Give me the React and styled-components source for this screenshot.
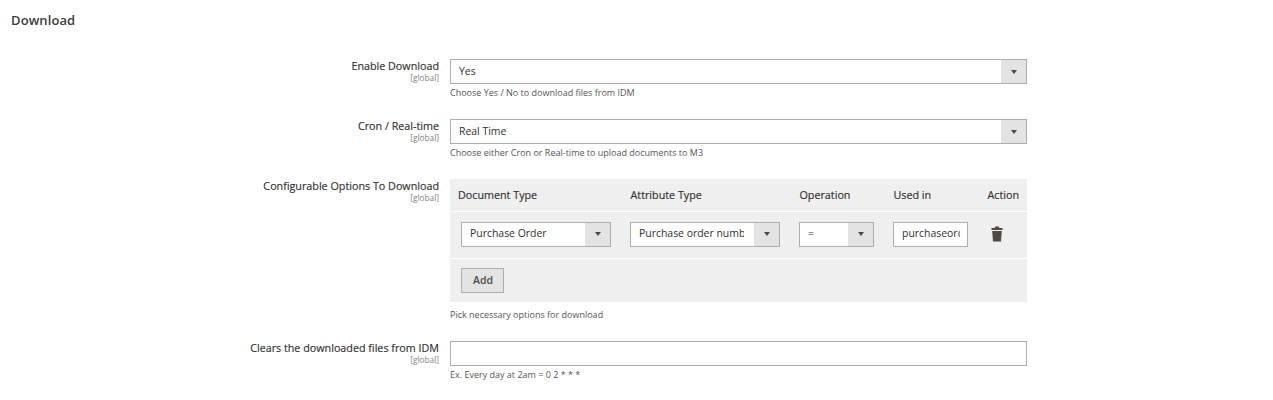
import React from 'react';
import styled, { createGlobalStyle } from 'styled-components';

const GlobalStyle = createGlobalStyle`
  html, body {
    margin: 0;
    padding: 0;
    background: #ffffff;
    font-family: 'Open Sans', 'Liberation Sans', sans-serif;
    color: #303030;
  }
`;

const Page = styled.div`
  width: 1273px;
  height: 400px;
  overflow: hidden;
  padding: 11px 0 0 11px;
  box-sizing: border-box;
`;

const Title = styled.h2`
  margin: 0 0 30px;
  height: 18px;
  font-size: 13px;
  line-height: 18px;
  font-weight: 600;
  letter-spacing: 0.1px;
  color: #3c3c3c;
`;

const Form = styled.div`
  display: flex;
  flex-direction: column;
`;

const Row = styled.div`
  display: grid;
  grid-template-columns: 428px 577px;
  column-gap: 11px;
  margin-bottom: ${({ $gap }) => $gap}px;
`;

const LabelCell = styled.div`
  text-align: right;
`;

const LabelText = styled.div`
  font-size: 10.75px;
  line-height: 14px;
  font-weight: 400;
  color: #303030;
  -webkit-text-stroke: 0.15px #303030;
`;

const Scope = styled.div`
  font-size: 8.3px;
  line-height: 10px;
  color: #808080;
`;

const SelectBox = styled.div`
  display: flex;
  box-sizing: border-box;
  width: ${({ $width }) => ($width ? `${$width}px` : '100%')};
  height: 25px;
  border: 1px solid #adadad;
  background: #ffffff;
`;

const NativeSelect = styled.select`
  flex: 1;
  min-width: 0;
  border: none;
  outline: none;
  appearance: none;
  background: #ffffff;
  padding: 0 ${({ $clip }) => ($clip ? 10 : 2)}px 2px 8px;
  font-family: inherit;
  font-size: 10.45px;
  color: #303030;
`;

const ArrowBox = styled.div`
  width: 25px;
  flex: none;
  display: flex;
  align-items: center;
  justify-content: center;
  background: #e3e3e3;
`;

const Arrow = styled.span`
  width: 0;
  height: 0;
  border-left: 3.5px solid transparent;
  border-right: 3.5px solid transparent;
  border-top: 4px solid #514943;
`;

const Hint = styled.div`
  font-size: 9px;
  line-height: 12px;
  margin-top: ${({ $top }) => $top || 3}px;
  color: #555555;
`;

const TextField = styled.input`
  display: block;
  box-sizing: border-box;
  width: ${({ $width }) => ($width ? `${$width}px` : '100%')};
  height: 25px;
  border: 1px solid #adadad;
  outline: none;
  background: #ffffff;
  padding: 0 7px 2px 8px;
  font-family: inherit;
  font-size: 10.45px;
  color: #303030;
`;

const OptionsTable = styled.div`
  background: #efefef;
  display: flex;
  flex-direction: column;
`;

const HeadRow = styled.div`
  display: grid;
  grid-template-columns: 172.5px 169px 94px 94px 40px;
  padding-left: 8px;
  height: 32px;
  align-items: center;
  border-bottom: 1px solid #ffffff;
`;

const HeadCell = styled.div`
  font-size: 10.75px;
  font-weight: 400;
  color: #303030;
  -webkit-text-stroke: 0.15px #303030;
`;

const BodyRow = styled.div`
  display: grid;
  grid-template-columns: 169px 169px 94px 94px 40px;
  padding: 0 0 2px 11px;
  box-sizing: border-box;
  height: 47px;
  align-items: center;
  border-bottom: 1px solid #ffffff;
`;

const TrashButton = styled.button`
  display: flex;
  padding: 0;
  margin-left: 4px;
  border: none;
  background: none;
`;

const FootRow = styled.div`
  height: 43px;
  display: flex;
  align-items: flex-start;
  padding: 9px 0 0 11px;
  box-sizing: border-box;
`;

const AddButton = styled.button`
  width: 43px;
  height: 25px;
  padding: 0 0 2px 1px;
  border: 1px solid #adadad;
  background: #e3e3e3;
  font-family: inherit;
  font-size: 10.5px;
  font-weight: 600;
  color: #514943;
`;

const TrashIcon = () => (
  <svg width="12" height="16" viewBox="0 0 12 16" fill="#514943">
    <path d="M4.2 0.5h3.6l.5 1.5H11.5v2H.5V2h3.2z" />
    <path d="M1.2 5h9.6l-.8 10.5H2z" />
  </svg>
);

const Select = ({ value, width, clip }) => (
  <SelectBox $width={width}>
    <NativeSelect defaultValue={value} $clip={clip}>
      <option>{value}</option>
    </NativeSelect>
    <ArrowBox>
      <Arrow />
    </ArrowBox>
  </SelectBox>
);

const Label = ({ children }) => (
  <LabelCell>
    <LabelText>{children}</LabelText>
    <Scope>[global]</Scope>
  </LabelCell>
);

const App = () => (
  <Page>
    <GlobalStyle />
    <Title>Download</Title>
    <Form>
      <Row $gap={20}>
        <Label>Enable Download</Label>
        <div>
          <Select value="Yes" />
          <Hint>Choose Yes / No to download files from IDM</Hint>
        </div>
      </Row>
      <Row $gap={20}>
        <Label>Cron / Real-time</Label>
        <div>
          <Select value="Real Time" />
          <Hint>Choose either Cron or Real-time to upload documents to M3</Hint>
        </div>
      </Row>
      <Row $gap={20}>
        <Label>Configurable Options To Download</Label>
        <div>
          <OptionsTable>
            <HeadRow>
              <HeadCell>Document Type</HeadCell>
              <HeadCell>Attribute Type</HeadCell>
              <HeadCell>Operation</HeadCell>
              <HeadCell>Used in</HeadCell>
              <HeadCell>Action</HeadCell>
            </HeadRow>
            <BodyRow>
              <Select value="Purchase Order" width={150} clip />
              <Select value="Purchase order number" width={150} clip />
              <Select value="=" width={75} clip />
              <TextField $width={75} defaultValue="purchaseorder" />
              <TrashButton type="button" aria-label="Delete">
                <TrashIcon />
              </TrashButton>
            </BodyRow>
            <FootRow>
              <AddButton type="button">Add</AddButton>
            </FootRow>
          </OptionsTable>
          <Hint $top={7}>Pick necessary options for download</Hint>
        </div>
      </Row>
      <Row $gap={0}>
        <Label>Clears the downloaded files from IDM</Label>
        <div>
          <TextField />
          <Hint>Ex. Every day at 2am = 0 2 * * *</Hint>
        </div>
      </Row>
    </Form>
  </Page>
);

export default App;
